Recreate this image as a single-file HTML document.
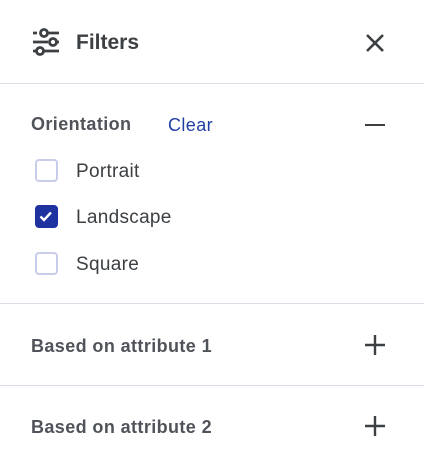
<!DOCTYPE html><html><head><style>
body{margin:0;width:424px;height:462px;background:#fff;font-family:"Liberation Sans",sans-serif;color:#3c4043;position:relative;overflow:hidden}
.a{position:absolute}
.hr{position:absolute;left:0;width:424px;height:1px;background:#dcdde6}
.h{font-weight:bold;font-size:18px;letter-spacing:0.4px;color:#50545a}
.cb{position:absolute;left:35px;width:23px;height:23px;box-sizing:border-box;border:2.5px solid #c9cdea;border-radius:4px}
.lab{position:absolute;left:76px;font-size:19px;letter-spacing:0.3px;color:#3c4043}
</style></head><body>
<svg class="a" style="left:30px;top:27px" width="34" height="32" viewBox="30 27 34 32" fill="none" stroke="#3c4043" stroke-width="2.8">
<path d="M33 33h4M48 33h11M33 42h15M57 42h2M33 51h3M44 51h15"/>
<circle cx="44" cy="33" r="3.5"/><circle cx="53" cy="42" r="3.5"/><circle cx="40" cy="51" r="3.5"/>
</svg>
<div class="a" style="left:76px;top:31px;font-size:21px;font-weight:bold;color:#3c4043">Filters</div>
<svg class="a" style="left:365px;top:33px" width="20" height="20" viewBox="0 0 20 20" stroke="#3c4043" stroke-width="2.6"><path d="M2 2L18 18M18 2L2 18"/></svg>
<div class="hr" style="top:83px"></div>
<div class="a h" style="left:31px;top:114px">Orientation</div>
<div class="a" style="left:168px;top:115px;font-size:18px;letter-spacing:0.4px;color:#1f3fa5">Clear</div>
<div class="a" style="left:365px;top:124px;width:20px;height:2.4px;background:#3c4043"></div>
<div class="cb" style="top:159px"></div><div class="lab" style="top:161px">Portrait</div>
<div class="cb" style="top:205px;background:#1e33a0;border-color:#1e33a0"><svg width="18" height="18" viewBox="0 0 18 18"><path d="M3.5 9.5l3.5 3.5 7-7.5" stroke="#fff" stroke-width="2.4" fill="none"/></svg></div><div class="lab" style="top:207px">Landscape</div>
<div class="cb" style="top:252px"></div><div class="lab" style="top:254px">Square</div>
<div class="hr" style="top:303px"></div>
<div class="a h" style="left:31px;top:336px">Based on attribute 1</div>
<svg class="a" style="left:365px;top:335px" width="20" height="20" viewBox="0 0 20 20" stroke="#3c4043" stroke-width="2.4"><path d="M10 0V20M0 10H20"/></svg>
<div class="hr" style="top:385px"></div>
<div class="a h" style="left:31px;top:417px">Based on attribute 2</div>
<svg class="a" style="left:365px;top:416px" width="20" height="20" viewBox="0 0 20 20" stroke="#3c4043" stroke-width="2.4"><path d="M10 0V20M0 10H20"/></svg>
</body></html>
